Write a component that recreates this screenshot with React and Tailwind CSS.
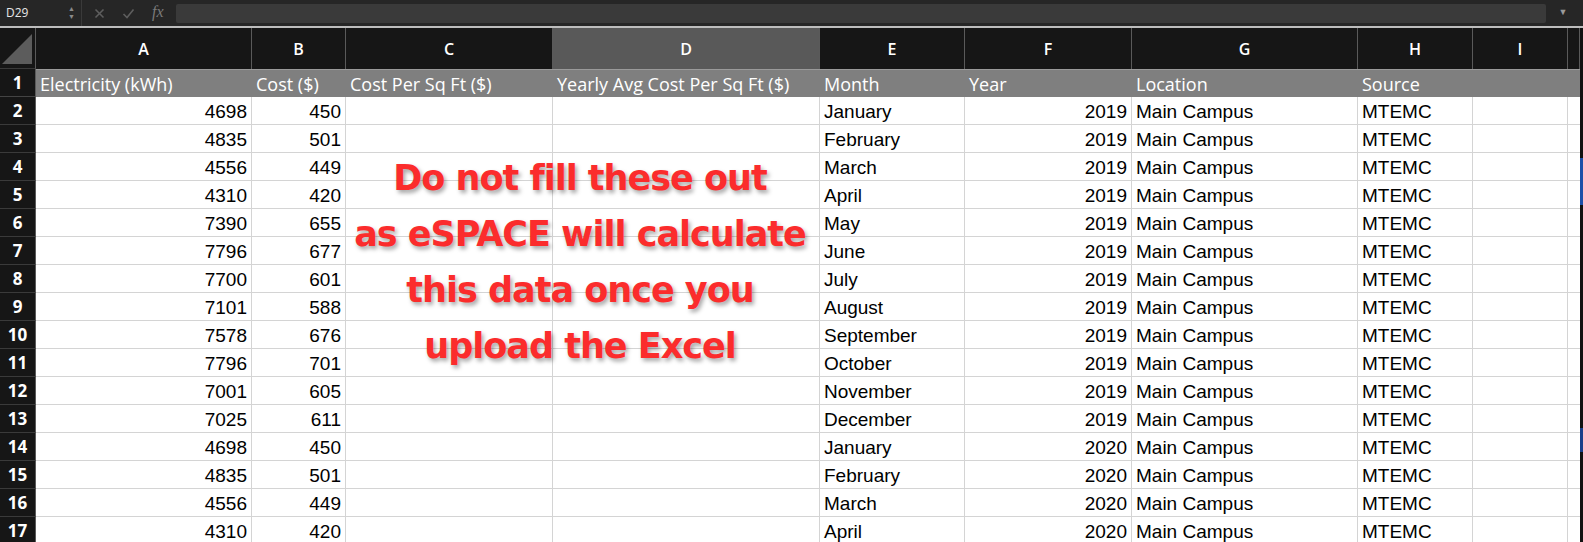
import React from "react";

const A = [4698,4835,4556,4310,7390,7796,7700,7101,7578,7796,7001,7025,4698,4835,4556,4310];
const B = [450,501,449,420,655,677,601,588,676,701,605,611,450,501,449,420];
const M = ["January","February","March","April","May","June","July","August","September","October","November","December","January","February","March","April"];

const cols = "grid grid-cols-[36px_216px_94px_207px_267px_145px_167px_226px_115px_95px_12px]";
const cell = "border-r border-b border-[#d4d4d4] h-[28px] leading-[30px] px-[4px] overflow-hidden whitespace-nowrap";

export default function App() {
  return (
    <div className="w-[1583px] h-[542px] overflow-hidden bg-[#1e1e1e] relative" style={{ fontFamily: "'Liberation Sans', Arial, sans-serif" }}>
      {/* formula bar */}
      <div className="h-[26px] bg-[#262626] flex items-center">
        <div className="w-[82px] h-full flex items-center justify-between pl-[6px] pr-[6px] border-r border-[#3a3a3a]">
          <span className="text-[12px] text-[#e6e6e6]" style={{ fontFamily: "'Open Sans', sans-serif" }}>D29</span>
          <span className="flex flex-col text-[#8a8a8a] text-[7px] leading-[8px]">
            <span>▲</span>
            <span>▼</span>
          </span>
        </div>
        <div className="w-[94px] flex items-center gap-[17px] pl-[12px] text-[#5e5e5e]">
          <svg width="11" height="11" viewBox="0 0 11 11"><path d="M1.5 1.5l8 8M9.5 1.5l-8 8" stroke="#5e5e5e" strokeWidth="1.6" /></svg>
          <svg width="13" height="11" viewBox="0 0 13 11"><path d="M1.5 6l3.5 3.5 6.5-8" stroke="#5e5e5e" strokeWidth="1.6" fill="none" /></svg>
          <span className="text-[16px] italic text-[#7a7a7a] -mt-[2px]" style={{ fontFamily: "'Liberation Serif', serif" }}>fx</span>
        </div>
        <div className="w-[1370px] h-[19px] bg-[#3a3a3a] rounded-[2px]" />
        <div className="flex-1 flex justify-center text-[#9a9a9a] text-[9px] pr-[3px]">▼</div>
      </div>
      <div className="h-[2px] bg-[#bdbdbd]" />

      <div className="flex">
        <div className="w-[1580px]">
          {/* column headers */}
          <div className={`${cols} h-[41px] bg-[#161616] text-white text-[16px] font-semibold`} style={{ fontFamily: "'Open Sans', sans-serif" }}>
            <div className="relative border-r border-[#5a5a5a] border-b border-b-[#3a3a3a]">
              <svg className="absolute right-[3px] bottom-[4px]" width="30" height="30" viewBox="0 0 30 30"><path d="M30 0V30H0Z" fill="#5c5c5c" /></svg>
            </div>
            {["A","B","C","D","E","F","G","H","I",""].map((l, i) => (
              <div key={i} className={`flex items-center justify-center border-r border-[#5a5a5a] ${l === "D" ? "bg-[#595959]" : ""}`}>{l}</div>
            ))}
          </div>
          {/* row 1 */}
          <div className={`${cols} h-[28px] text-white text-[18px]`} style={{ fontFamily: "'Open Sans', sans-serif" }}>
            <div className="bg-[#161616] flex items-center justify-center font-bold text-[17px] border-r border-[#5a5a5a] border-b border-b-[#444]">1</div>
            {["Electricity (kWh)","Cost ($)","Cost Per Sq Ft ($)","Yearly Avg Cost Per Sq Ft ($)","Month","Year","Location","Source","",""].map((t, i) => (
              <div key={i} className="bg-[#7f7f7f] border-t border-[#9a9a9a] px-[4px] leading-[29px] whitespace-nowrap overflow-hidden">{t}</div>
            ))}
          </div>
          {/* data rows */}
          {A.map((a, r) => (
            <div key={r} className={`${cols} bg-white text-black text-[19px]`}>
              <div className="bg-[#161616] text-white font-bold text-[17px] h-[28px] flex items-center justify-center border-r border-[#5a5a5a] border-b border-b-[#3a3a3a]" style={{ fontFamily: "'Open Sans', sans-serif" }}>{r + 2}</div>
              <div className={`${cell} text-right`}>{a}</div>
              <div className={`${cell} text-right`}>{B[r]}</div>
              <div className={cell}></div>
              <div className={cell}></div>
              <div className={cell}>{M[r]}</div>
              <div className={`${cell} text-right`}>{r < 12 ? 2019 : 2020}</div>
              <div className={cell}>Main Campus</div>
              <div className={cell}>MTEMC</div>
              <div className={cell}></div>
              <div className="border-b border-[#d4d4d4] h-[28px]"></div>
            </div>
          ))}
        </div>
        <div className="w-[3px] bg-[#111] flex flex-col">
          <div className="h-[130px]" />
          <div className="h-[47px] bg-[#1d4fa8]" />
          <div className="h-[223px]" />
          <div className="h-[24px] bg-[#1a3f8a]" />
        </div>
      </div>

      {/* overlay note */}
      <div
        className="absolute left-[330px] top-[150px] w-[500px] text-center text-[#fb2c2c] text-[35px] font-bold leading-[56px] [text-shadow:2px_3px_4px_rgba(0,0,0,0.35)]"
        style={{ fontFamily: "'DejaVu Sans', Verdana, sans-serif", letterSpacing: "-1px" }}
      >
        <div>Do not fill these out</div>
        <div>as eSPACE will calculate</div>
        <div>this data once you</div>
        <div>upload the Excel</div>
      </div>
    </div>
  );
}
